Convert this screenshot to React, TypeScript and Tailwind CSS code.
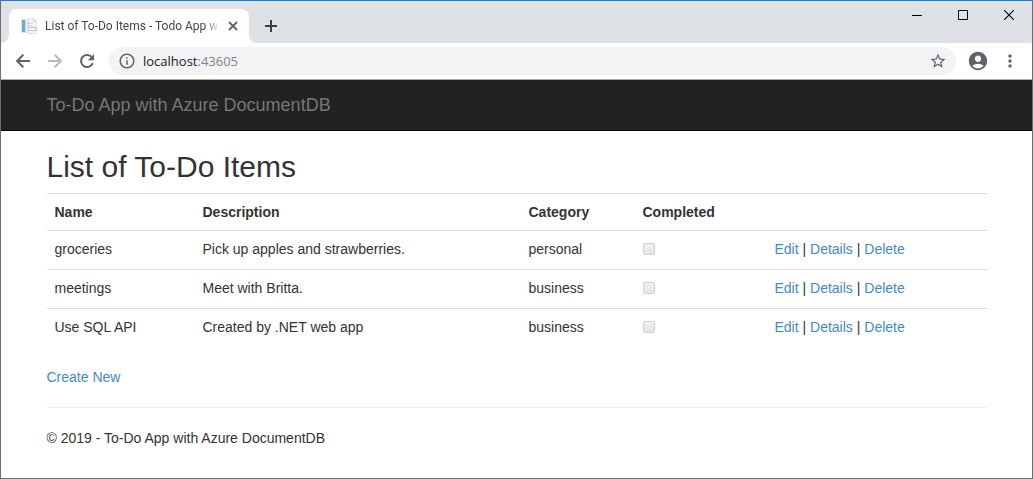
import React from "react";
import { MdAccountCircle, MdInfoOutline, MdMoreVert, MdStarBorder } from "react-icons/md";

type Item = {
  name: string;
  description: string;
  category: string;
  completed: boolean;
};

const items: Item[] = [
  { name: "groceries", description: "Pick up apples and strawberries.", category: "personal", completed: false },
  { name: "meetings", description: "Meet with Britta.", category: "business", completed: false },
  { name: "Use SQL API", description: "Created by .NET web app", category: "business", completed: false },
];

function PageIcon() {
  return (
    <svg width="16" height="16" viewBox="0 0 16 16" aria-hidden="true" className="shrink-0">
      <rect x="0.5" y="1.5" width="11" height="13" fill="#e9eef2" stroke="#dfe5ea" />
      <rect x="1" y="2" width="3" height="12" fill="#6aabd8" />
      <path d="M4.500 2v12" stroke="#c3dcec" />
      <path d="M7.500 .5h5l3 3v12h-8z" fill="#f3f4f6" stroke="#dcdfe4" />
      <path d="M12.500 .5v3h3" fill="none" stroke="#cfd4da" />
      <path d="M6 5.500h6M6 7.500h5" stroke="#cdd3da" />
      <path d="M7.500 9.500h7v3h-7z" fill="#fafafa" stroke="#c3c9d0" />
    </svg>
  );
}

function ArrowIcon({ direction }: { direction: "back" | "forward" }) {
  return (
    <svg width="14" height="14" viewBox="0 0 14 14" aria-hidden="true" fill="none" stroke="currentColor" strokeWidth="2">
      <path d={direction === "back" ? "M14 7H1.500M7.300 .7L1.200 7l6.100 6.300" : "M0 7h12.500M6.700 .7L12.800 7l-6.100 6.300"} />
    </svg>
  );
}

function ReloadIcon() {
  return (
    <svg width="14" height="14" viewBox="0 0 14 14" aria-hidden="true">
      <path d="M12.700 9.100A6 6 0 1 1 11.300 2.800" fill="none" stroke="currentColor" strokeWidth="2" />
      <path d="M14 0v6.200H7.800z" fill="currentColor" />
    </svg>
  );
}

function TabFlare({ side }: { side: "left" | "right" }) {
  return (
    <svg width="8" height="8" viewBox="0 0 8 8" aria-hidden="true" className="shrink-0 self-end">
      <path d={side === "left" ? "M8 0v8H0a8 8 0 0 0 8-8z" : "M0 0v8h8a8 8 0 0 1-8-8z"} fill="#fff" />
    </svg>
  );
}

function TabStrip() {
  return (
    <div className="flex h-[42px] items-end justify-between bg-[#dee1e6]">
      <div className="flex h-[34px] items-center">
        <TabFlare side="left" />
        <div className="flex h-full w-60 items-center rounded-t-lg bg-white pl-3 pr-2">
          <PageIcon />
          <span className="ml-2 whitespace-nowrap bg-linear-to-r from-[#3c4043] from-92% to-[#e8e8e8] bg-clip-text font-[Roboto,'Open_Sans',sans-serif] text-[12px] leading-4 text-transparent">
            List of To-Do Items - Todo App w
          </span>
          <button aria-label="Close tab" className="ml-auto flex size-4 items-center justify-center">
            <svg width="10" height="10" viewBox="0 0 10 10" aria-hidden="true">
              <path d="M1 1l8 8M9 1l-8 8" stroke="#5f6368" strokeWidth="1.800" />
            </svg>
          </button>
        </div>
        <TabFlare side="right" />
        <button aria-label="New tab" className="ml-1 flex size-5 items-center justify-center">
          <svg width="12" height="12" viewBox="0 0 12 12" aria-hidden="true">
            <path d="M6 0v12M0 6h12" stroke="#3c4043" strokeWidth="2" />
          </svg>
        </button>
      </div>
      <div className="flex self-start">
        <button aria-label="Minimize" className="flex h-7 w-[46px] items-center justify-center">
          <svg width="10" height="10" viewBox="0 0 10 10" aria-hidden="true">
            <path d="M0 5.500h10" stroke="#000" />
          </svg>
        </button>
        <button aria-label="Maximize" className="flex h-7 w-[46px] items-center justify-center">
          <svg width="10" height="10" viewBox="0 0 10 10" aria-hidden="true">
            <path d="M.5 .5h9v9h-9z" fill="none" stroke="#000" />
          </svg>
        </button>
        <button aria-label="Close window" className="flex h-7 w-[46px] items-center justify-center">
          <svg width="10" height="10" viewBox="0 0 10 10" aria-hidden="true">
            <path d="M0 0l10 10M10 0L0 10" stroke="#000" strokeWidth="1.100" />
          </svg>
        </button>
      </div>
    </div>
  );
}

function Toolbar() {
  return (
    <div className="flex h-[37px] items-center border-b border-[#a9a9a9] bg-white pl-3 pr-3 text-[#5f6368]">
      <div className="flex gap-3">
        <button aria-label="Back" className="flex size-5 items-center justify-center">
          <ArrowIcon direction="back" />
        </button>
        <button aria-label="Forward" className="flex size-5 items-center justify-center text-[#bababa]">
          <ArrowIcon direction="forward" />
        </button>
        <button aria-label="Reload" className="flex size-5 items-center justify-center">
          <ReloadIcon />
        </button>
      </div>
      <div className="ml-3 flex h-7 flex-1 items-center rounded-full bg-[#f1f3f4] px-[9px]">
        <MdInfoOutline size={18} aria-hidden="true" />
        <div className="ml-[7px] flex-1 font-['Open_Sans','Noto_Sans',sans-serif] text-[13px] leading-5">
          <span className="text-[#202124]">localhost</span>
          <span className="text-[#80868b]">:43605</span>
        </div>
        <button aria-label="Bookmark this page" className="flex size-[18px] items-center justify-center">
          <MdStarBorder size={18} />
        </button>
      </div>
      <button aria-label="Profile" className="ml-3 flex size-5 items-center justify-center">
        <MdAccountCircle size={22} className="shrink-0" />
      </button>
      <button aria-label="Menu" className="ml-3 flex size-5 items-center justify-center">
        <MdMoreVert size={20} />
      </button>
    </div>
  );
}

function ItemLink({ children }: { children: string }) {
  return (
    <a href="#" className="text-[#428bca] hover:underline">
      {children}
    </a>
  );
}

function ItemTable() {
  return (
    <table className="mb-[19px] w-full table-fixed text-left">
      <thead>
        <tr className="h-[37px] border-t border-[#ddd]">
          <th className="w-[148px] px-2 font-bold">Name</th>
          <th className="w-[326px] px-2 font-bold">Description</th>
          <th className="w-[114px] px-2 font-bold">Category</th>
          <th className="w-[132px] px-2 font-bold">Completed</th>
          <td />
        </tr>
      </thead>
      <tbody>
        {items.map((item) => (
          <tr key={item.name} className="h-[39px] border-t border-[#ddd] align-top">
            <td className="px-2 pt-2">{item.name}</td>
            <td className="px-2 pt-2">{item.description}</td>
            <td className="px-2 pt-2">{item.category}</td>
            <td className="px-2 pt-2">
              <div className="flex h-5 items-center">
                <input
                  type="checkbox"
                  disabled
                  checked={item.completed}
                  readOnly
                  aria-label={`${item.name} completed`}
                  className="size-3 appearance-none rounded-xs border border-[#d0d0d0] bg-linear-to-b from-[#f0f0f0] to-[#e6e6e6]"
                />
              </div>
            </td>
            <td className="px-2 pt-2">
              <ItemLink>Edit</ItemLink> | <ItemLink>Details</ItemLink> | <ItemLink>Delete</ItemLink>
            </td>
          </tr>
        ))}
      </tbody>
    </table>
  );
}

export default function App() {
  return (
    <div className="flex min-h-screen flex-col border border-[#6e6e6e] border-t-[#1a7fd4] bg-white">
      <TabStrip />
      <Toolbar />
      <div className="font-['Liberation_Sans',Arial,sans-serif] text-[14px] leading-5 text-[#333]">
        <nav className="border-b border-[#080808] bg-[#222]">
          <div className="mx-auto flex h-[50px] max-w-[972px] items-center px-4">
            <a href="#" className="text-[18px] leading-5 text-[#777]">
              To-Do App with Azure DocumentDB
            </a>
          </div>
        </nav>
        <main className="mx-auto max-w-[972px] px-4 pt-5">
          <h2 className="mb-[10px] text-[30px] leading-8">List of To-Do Items</h2>
          <ItemTable />
          <p>
            <ItemLink>Create New</ItemLink>
          </p>
          <hr className="my-5 border-[#eee]" />
          <footer className="pb-5">
            <p>© 2019 - To-Do App with Azure DocumentDB</p>
          </footer>
        </main>
      </div>
    </div>
  );
}
